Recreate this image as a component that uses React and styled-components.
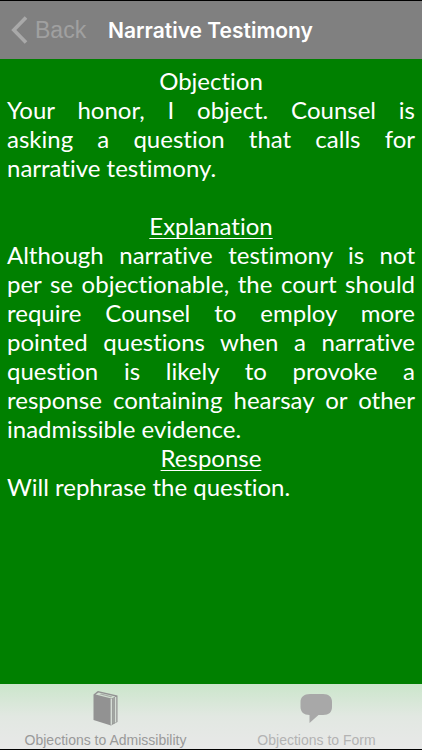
import React from 'react'
import styled, { createGlobalStyle } from 'styled-components'

const App = () => {
  return (
    <Screen>
      <GlobalStyle />
      <Header>
        <BackButton type="button">
          <svg width="17" height="28" viewBox="0 0 17 28" aria-hidden="true">
            <path
              d="M15 1.5L2.8 14L15 26.5"
              fill="none"
              stroke="#a9a9a9"
              strokeWidth="3.6"
            />
          </svg>
          Back
        </BackButton>
        <Title>Narrative Testimony</Title>
      </Header>
      <Content>
        <Heading>Objection</Heading>
        <Text $gap>
          Your honor, I object. Counsel is asking&nbsp;a question that calls for
          narrative testimony.
        </Text>
        <Heading $underline>Explanation</Heading>
        <Text>
          Although narrative testimony is not per se objectionable, the court
          should require Counsel to employ more pointed questions when a
          narrative question is likely to provoke a response containing hearsay
          or other inadmissible evidence.
        </Text>
        <Heading $underline>Response</Heading>
        <Text>Will rephrase the question.</Text>
      </Content>
      <TabBar>
        <Tab href="#" $color="#999999">
          <svg width="26" height="36" viewBox="0 0 26 36" aria-hidden="true">
            <path d="M0.5 4.5L4.5 1.2Q5 1 6 1.2L24.5 5.5V32L18 35.5L0.5 30Z" fill="#929292" />
            <path d="M2.5 4.6L5.5 2.4L22.5 6.4L18.5 8.6Z" fill="#d2e0d2" />
            <path d="M6.5 4.2L8.2 3.6L19.5 6.4L17.8 7.2Z" fill="#a6aba6" />
            <path d="M18.3 8.8V34.8M22.6 7V32.6" stroke="#d5ddd5" strokeWidth="1.4" />
            <path d="M20.5 8V33.6" stroke="#a2a6a2" strokeWidth="2.4" />
          </svg>
          Objections to Admissibility
        </Tab>
        <Tab href="#" $color="#b3b3b3">
          <svg width="34" height="36" viewBox="0 0 34 36" aria-hidden="true">
            <path
              d="M10 4H23C29 4 32 7 32 12V17C32 22 29 25 23 25H18.5L9.5 33V25C4 25 0.5 22 0.5 17V12C0.5 7 4 4 10 4Z"
              fill="#a8a8a8"
            />
          </svg>
          Objections to Form
        </Tab>
      </TabBar>
    </Screen>
  )
}

const GlobalStyle = createGlobalStyle`
  * {
    box-sizing: border-box;
  }
  body {
    margin: 0;
    background: #008000;
  }
`
const Screen = styled.div`
  display: flex;
  flex-direction: column;
  min-height: 100vh;
  border-top: 1px solid #000;
  border-bottom: 1px solid #000;
  font-family: 'Liberation Sans', Arial, sans-serif;
`
const Header = styled.header`
  display: flex;
  align-items: center;
  height: 58px;
  background: #808080;
`
const BackButton = styled.button`
  display: flex;
  align-items: center;
  gap: 7px;
  width: 108px;
  padding: 0 11px;
  border: 0;
  background: none;
  font: inherit;
  font-size: 23px;
  color: #a0a0a0;
`
const Title = styled.h1`
  margin: 0;
  font-family: Inter, sans-serif;
  font-size: 21px;
  font-weight: 600;
  color: #fff;
`
const Content = styled.main`
  flex: 1;
  padding: 7px;
  font-family: Lato, sans-serif;
  font-size: 24px;
  font-weight: 400;
  font-variant-ligatures: none;
  line-height: 29px;
  color: #fff;
`
const Heading = styled.h2`
  margin: 0;
  font-size: inherit;
  font-weight: inherit;
  text-align: center;
  text-decoration: ${(props) => (props.$underline ? 'underline' : 'none')};
  text-decoration-thickness: 1px;
  text-underline-offset: 3px;
  text-decoration-skip-ink: none;
`
const Text = styled.p`
  margin: 0 0 ${(props) => (props.$gap ? '29px' : '0')};
  text-align: justify;
`
const TabBar = styled.nav`
  display: flex;
  height: 65px;
  background: linear-gradient(#cbe6cb, #e2e8e2 50%, #e8e8e8);
`
const Tab = styled.a`
  display: flex;
  flex: 1;
  flex-direction: column;
  align-items: center;
  gap: 5px;
  padding-top: 6px;
  font-size: 14px;
  line-height: 18px;
  color: ${(props) => props.$color};
  text-decoration: none;
`

export default App
